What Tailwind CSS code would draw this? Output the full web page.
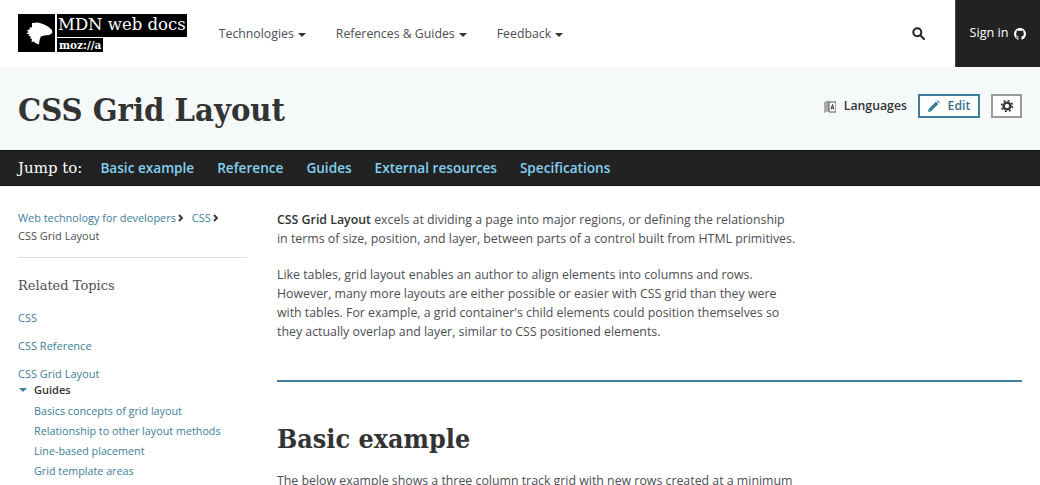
<!DOCTYPE html>
<html lang="en">
  <head>
    <meta charset="UTF-8" />
    <title>CSS Grid Layout</title>
    <script src="https://cdn.jsdelivr.net/npm/@tailwindcss/browser@4"></script>
  </head>
  <body class="h-[485px] overflow-hidden bg-white font-['Open_Sans',sans-serif] text-[#333]">
    <!-- top nav -->
    <header class="flex h-[67px] items-stretch bg-white">
      <a href="#" class="ml-[18px] mt-[14px] flex h-[38px] items-start">
        <svg class="h-[38px] w-[37px]" viewBox="0 0 37 38">
          <rect width="37" height="38" fill="#000" />
          <path fill="#fff" d="M14 9l6-.500 5 1.500 5 2.500 4 3.500.300 3-3 2-5 .500-3.500 1-1.200 3.500-.600 4.500-2.500-1-1.500-.500-1-1.500-2.500.500.500-3-1.800-.500.800-2-2.500-.500 1-1.500-3-1 2-1.500-1.500-1.500 3-1.500-.500-1.500 2.500-.200z"/>
        </svg>
        <span class="ml-[2px] flex flex-col items-start">
          <span class="h-[23px] bg-black pl-px pr-px font-['DejaVu_Serif',serif] text-[16.5px] leading-[22px] text-white">MDN web docs</span>
          <span class="mt-px h-[14px] bg-black px-[2px] font-['DejaVu_Serif',serif] text-[10.500px] font-bold leading-[14px] text-white">moz://a</span>
        </span>
      </a>
      <nav class="ml-[32px] flex items-center gap-[30px] pt-[1px] text-[12.3px] text-[#4d4e53]">
        <a href="#" class="flex items-center gap-[4px]">Technologies <span class="mt-px h-0 w-0 border-x-[4px] border-t-[4px] border-x-transparent border-t-[#333]"></span></a>
        <a href="#" class="flex items-center gap-[4px]">References &amp; Guides <span class="mt-px h-0 w-0 border-x-[4px] border-t-[4px] border-x-transparent border-t-[#333]"></span></a>
        <a href="#" class="flex items-center gap-[4px]">Feedback <span class="mt-px h-0 w-0 border-x-[4px] border-t-[4px] border-x-transparent border-t-[#333]"></span></a>
      </nav>
      <div class="ml-auto flex items-center pr-[30px]">
        <svg class="h-[13px] w-[13px]" viewBox="0 0 13 13" fill="none" stroke="#222" stroke-width="2"><circle cx="5.300" cy="5.300" r="4"/><path d="M8.300 8.300l3.800 3.800" stroke-linecap="round"/></svg>
      </div>
      <a href="#" class="flex w-[85px] items-center justify-center gap-[6px] border-l border-[#444] bg-[#222] text-[12.6px] text-white">
        Sign in
        <svg class="h-[12px] w-[12px]" viewBox="0 0 16 16" fill="#fff"><path d="M8 0C3.600 0 0 3.600 0 8c0 3.500 2.300 6.500 5.500 7.600.400.100.500-.200.500-.400v-1.400c-2.200.500-2.700-1-2.700-1-.400-.900-.900-1.200-.900-1.200-.700-.500.100-.500.100-.500.800.100 1.200.800 1.200.800.700 1.200 1.900.900 2.300.700.100-.500.300-.900.500-1.100-1.800-.200-3.600-.900-3.600-4 0-.900.300-1.600.800-2.100-.100-.200-.400-1 .100-2.100 0 0 .700-.200 2.200.800.600-.200 1.300-.300 2-.300s1.400.100 2 .300c1.500-1 2.200-.800 2.200-.800.400 1.100.200 1.900.100 2.100.500.600.800 1.300.800 2.100 0 3.100-1.900 3.700-3.700 3.900.300.300.600.800.600 1.500v2.200c0 .200.100.500.600.400C13.700 14.500 16 11.500 16 8c0-4.400-3.600-8-8-8z"/></svg>
      </a>
    </header>

    <!-- title band -->
    <section class="flex h-[83px] items-center bg-[#f5f9fa] pl-[18px] pr-[18px]">
      <h1 class="pt-[3px] font-['DejaVu_Serif_Condensed','DejaVu_Serif',serif] text-[32.4px] font-bold leading-[80px] text-[#333]">CSS Grid Layout</h1>
      <div class="ml-auto flex items-center pb-[5px]">
        <span class="flex items-center gap-[8px] text-[12.3px] font-semibold text-[#333]">
          <svg class="h-[13px] w-[12px]" viewBox="0 0 12 13"><path d="M0 2l5-2v11l-5 2z" fill="#aaa"/><path d="M5 2h7v10H5z" fill="#fff" stroke="#555"/><path d="M7 9.500l1.500-5 1.500 5M7.500 8h2" stroke="#333" fill="none"/></svg>
          Languages
        </span>
        <a href="#" class="ml-[11px] flex h-[24px] w-[62px] items-center justify-center gap-[8px] border-2 border-[#3d7e9a] bg-white text-[12.3px] font-semibold text-[#3d6f87]">
          <svg class="h-[12px] w-[12px]" viewBox="0 0 12 12" fill="#3d7e9a"><path d="M0 12l.800-3.200L8 1.600 10.400 4 3.200 11.200zM8.800.800l.800-.800 2.400 2.400-.800.800z"/></svg>
          Edit
        </a>
        <button class="ml-[11px] flex h-[24px] w-[31px] items-center justify-center border-2 border-[#999] bg-white">
          <svg class="h-[12px] w-[12px]" viewBox="0 0 12 12"><circle cx="6" cy="6" r="3.400" fill="none" stroke="#333" stroke-width="2.400"/><circle cx="6" cy="6" r="5.500" fill="none" stroke="#333" stroke-width="1.600" stroke-dasharray="2 2.320"/></svg>
        </button>
      </div>
    </section>

    <!-- jump bar -->
    <div class="flex h-[36px] items-center border-y border-[#111] bg-[#222] pl-[18px]">
      <span class="font-['DejaVu_Serif',serif] text-[15px] text-white">Jump to:</span>
      <nav class="ml-[18px] flex gap-[23px] text-[13.6px] font-semibold text-[#83d0f2]">
        <a href="#">Basic example</a>
        <a href="#">Reference</a>
        <a href="#">Guides</a>
        <a href="#">External resources</a>
        <a href="#">Specifications</a>
      </nav>
    </div>

    <div class="flex pl-[18px] pr-[18px]">
      <!-- sidebar -->
      <aside class="w-[229px] shrink-0 pt-[23px] text-[11px] text-[#3d7e9a]">
        <div class="border-b border-[#ddd] pb-[12px] leading-[18px]">
          <div class="flex items-center">
            <a href="#" class="text-[10.9px]">Web technology for developers</a>
            <svg class="ml-[2px] h-[8px] w-[6px]" viewBox="0 0 6 8" fill="none" stroke="#333" stroke-width="1.800"><path d="M1 1l3 3-3 3"/></svg>
            <a href="#" class="ml-[8px]">CSS</a>
            <svg class="ml-[2px] h-[8px] w-[6px]" viewBox="0 0 6 8" fill="none" stroke="#333" stroke-width="1.800"><path d="M1 1l3 3-3 3"/></svg>
          </div>
          <span class="text-[#4d4e53]">CSS Grid Layout</span>
        </div>
        <h2 class="mt-[18px] font-['DejaVu_Serif',serif] text-[13px] leading-[20px] text-[#4d4e53]">Related Topics</h2>
        <ul class="mt-[13px]">
          <li class="leading-[18px]"><a href="#">CSS</a></li>
          <li class="mt-[10px] leading-[18px]"><a href="#">CSS Reference</a></li>
          <li class="mt-[10px] leading-[18px]"><a href="#">CSS Grid Layout</a></li>
          <li class="-mt-[2px] flex items-center leading-[18px] font-semibold text-[#333]">
            <span class="ml-px mr-[7px] h-0 w-0 border-x-[4px] border-t-[4px] border-x-transparent border-t-[#3d7e9a]"></span>Guides
          </li>
        </ul>
        <ul class="ml-[16px] mt-[3px] flex flex-col gap-[2px] text-[10.77px] leading-[18px]">
          <li><a href="#">Basics concepts of grid layout</a></li>
          <li><a href="#">Relationship to other layout methods</a></li>
          <li><a href="#">Line-based placement</a></li>
          <li><a href="#">Grid template areas</a></li>
        </ul>
      </aside>

      <!-- article -->
      <main class="ml-[30px] min-w-0 flex-1 pt-[25px] text-[12.35px] leading-[18.7px] text-[#4d4e53]">
        <p class="w-[520px]"><strong class="font-semibold text-[#333]">CSS Grid Layout</strong> excels at dividing a page into major regions, or defining the relationship in terms of size, position, and layer, between parts of a control built from HTML primitives.</p>
        <p class="mt-[18px] w-[520px]">Like tables, grid layout enables an author to align elements into columns and rows. However, many more layouts are either possible or easier with CSS grid than they were with tables. For example, a grid container's child elements could position themselves so they actually overlap and layer, similar to CSS positioned elements.</p>
        <hr class="mt-[39px] h-[2px] border-0 bg-[#3d7e9a]" />
        <h2 class="mt-[37px] font-['DejaVu_Serif_Condensed','DejaVu_Serif',serif] text-[26.7px] font-bold leading-[40px] text-[#333]">Basic example</h2>
        <p class="mt-[13px] whitespace-nowrap">The below example shows a three column track grid with new rows created at a minimum</p>
      </main>
    </div>
  </body>
</html>
